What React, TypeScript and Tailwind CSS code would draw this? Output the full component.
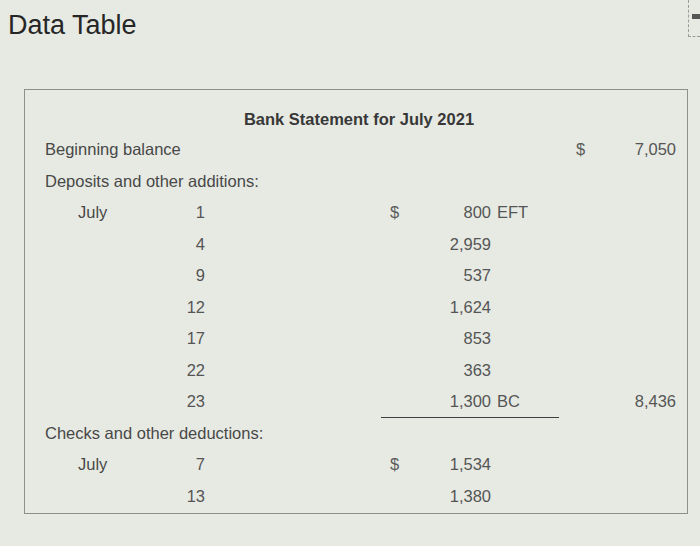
import type { ReactNode } from "react";

// ---- Statement rows ----
type Row = {
    label?: string;
    indent?: boolean;
    day?: string;
    midDollar?: boolean;
    amount?: string;
    suffix?: string;
    underline?: boolean;
    rightDollar?: boolean;
    total?: string;
};

const rows: Row[] = [
    { label: "Beginning balance", rightDollar: true, total: "7,050" },
    { label: "Deposits and other additions:" },
    { label: "July", indent: true, day: "1", midDollar: true, amount: "800", suffix: "EFT" },
    { day: "4", amount: "2,959" },
    { day: "9", amount: "537" },
    { day: "12", amount: "1,624" },
    { day: "17", amount: "853" },
    { day: "22", amount: "363" },
    { day: "23", amount: "1,300", suffix: "BC", underline: true, total: "8,436" },
    { label: "Checks and other deductions:" },
    { label: "July", indent: true, day: "7", midDollar: true, amount: "1,534" },
    { day: "13", amount: "1,380" },
];

export default function App() {
    return (
        <div
            className="w-[700px] h-[546px] overflow-hidden bg-[#e7eae3] text-[#484848]"
            style={{ fontFamily: '"Liberation Sans", Arial, sans-serif' }}
        >
            {/* Header */}
            <div className="flex items-start justify-between">
                <h1 className="ml-[8px] mt-[9px] text-[27px] leading-[32px] text-[#262626]">Data Table</h1>
                <div className="w-[12px] h-[37px] border-l border-b border-dashed border-[#9a9c97] pt-[14px] pl-[3px]">
                    <div className="w-full h-[5px] bg-[#555]" />
                </div>
            </div>

            {/* Statement panel */}
            <div className="ml-[24px] mt-[48px] w-[664px] h-[425px] border border-[#8c8f8a] pt-[19px]">
                <h2 className="text-center font-bold text-[16.5px] leading-[20px] text-[#383838] pl-[6px]">
                    Bank Statement for July 2021
                </h2>
                <div className="mt-[5px]">
                    {rows.map((r, i) => (
                        <StatementRow key={i} row={r} />
                    ))}
                </div>
            </div>
        </div>
    );
}

// ---- Single row: label/day | $ amount suffix | $ total ----
function StatementRow({ row }: { row: Row }) {
    return (
        <div className="flex h-[31.5px] items-center text-[16.5px]">
            <div className="w-[356px] pl-[20px]">
                {row.day ? (
                    <div className="flex w-[160px]">
                        <span className="pl-[33px]">{row.indent ? row.label : ""}</span>
                        <span className="ml-auto text-[#555]">{row.day}</span>
                    </div>
                ) : (
                    <span className="whitespace-nowrap">{row.label}</span>
                )}
            </div>
            <div className={`w-[178px] h-full flex items-center ${row.underline ? "border-b border-[#3f3f3f]" : ""}`}>
                <Cell className="w-[20px] ml-[9px] text-[#5c5c5c]">{row.midDollar ? "$" : ""}</Cell>
                <Cell className="w-[81px] text-right text-[#555]">{row.amount}</Cell>
                {row.suffix && <span className="pl-[6px] text-[#555]">{row.suffix}</span>}
            </div>
            <div className="flex-1 flex items-center pr-[11px]">
                <Cell className="w-[20px] ml-[17px] text-[#5c5c5c]">{row.rightDollar ? "$" : ""}</Cell>
                <Cell className="ml-auto text-[#555]">{row.total}</Cell>
            </div>
        </div>
    );
}

function Cell({ className, children }: { className: string; children?: ReactNode }) {
    return <span className={className}>{children}</span>;
}
